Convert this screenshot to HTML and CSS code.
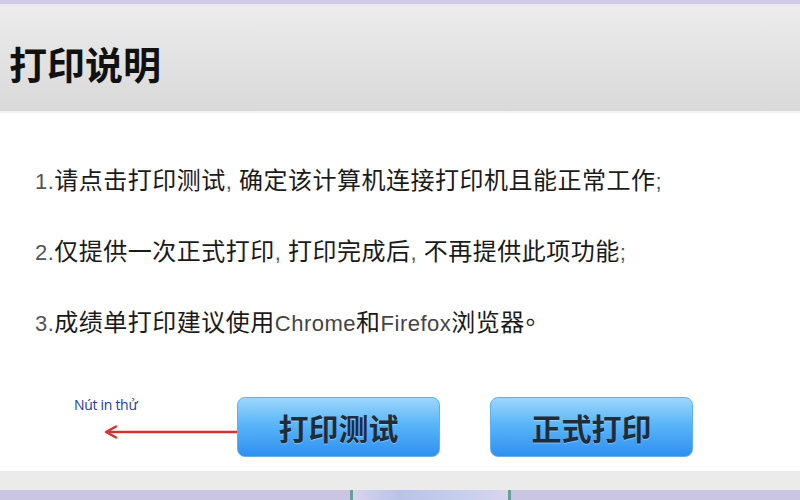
FILE: index.html
```html
<!DOCTYPE html>
<html lang="zh-CN">
<head>
    <meta charset="UTF-8">
    <meta name="viewport" content="width=device-width, initial-scale=1.0">
    <title>打印说明</title>
    <link rel="stylesheet" href="styles.css">
</head>
<body>
    <div class="top-strip"></div>
    <div class="header">
        <h1>打印说明</h1>
    </div>

    <div class="content">
        <p class="line"><span class="num">1.</span>请点击打印测试<span class="num">, </span>确定该计算机连接打印机且能正常工作<span class="num">;</span></p>
        <p class="line"><span class="num">2.</span>仅提供一次正式打印<span class="num">, </span>打印完成后<span class="num">, </span>不再提供此项功能<span class="num">;</span></p>
        <p class="line"><span class="num">3.</span>成绩单打印建议使用<span class="latin">Chrome</span>和<span class="latin">Firefox</span>浏览器<span class="dot">。</span></p>

        <div class="actions">
            <div class="note">
                <span class="note-text">Nút in thử</span>
                <svg class="arrow" width="134" height="14" viewBox="0 0 134 14">
                    <line x1="6" y1="7" x2="134" y2="7" stroke="#d2332f" stroke-width="2.5"/>
                    <polyline points="13,1.5 3,7 13,12.5" fill="none" stroke="#d2332f" stroke-width="2.5" stroke-linecap="round" stroke-linejoin="round"/>
                </svg>
            </div>
            <button class="btn">打印测试</button>
            <button class="btn">正式打印</button>
        </div>
    </div>

    <div class="footer"></div>
    <div class="bottom-strip">
        <div class="bottom-deco"></div>
    </div>
</body>
</html>
```

FILE: styles.css
```css
body { margin: 0; background: #fff; font-family: "Liberation Sans", "Noto Sans CJK SC", sans-serif; color: #1c1c1c; overflow: hidden; }
.top-strip { height: 4px; background: #cfcae6; border-bottom: 3px solid #ebe8f4; }
.header { height: 106px; display: flex; align-items: center; padding: 6px 0 0 9px; box-sizing: border-box; background: linear-gradient(#ececec, #d9d9d9); border-bottom: 2px solid #f2f2f2; }
.header h1 { margin: 0; font-family: "Noto Sans CJK SC", sans-serif; font-size: 38px; font-weight: 700; color: #111; }
.content { height: 358px; padding: 30px 0 0 35px; box-sizing: border-box; }
.line { margin: 0; height: 71px; line-height: 71px; font-family: "Noto Sans CJK SC", sans-serif; font-size: 24px; letter-spacing: 0.5px; color: #1a1a1a; }
.num { font-family: "Liberation Sans", sans-serif; color: #555; font-size: 22px; }
.latin { font-family: "Liberation Sans", sans-serif; color: #444; font-size: 22px; }
.dot { position: relative; top: -7px; margin-left: 1px; color: #222; }
.actions { display: flex; align-items: flex-start; margin-top: 41px; }
.note { width: 202px; display: flex; flex-direction: column; align-items: flex-start; }
.note-text { margin: 0 0 12px 39px; font-family: "Open Sans", sans-serif; font-size: 14px; letter-spacing: -0.3px; color: #1d3c99; line-height: 16px; }
.arrow { margin-left: 68px; display: block; }
.btn { width: 203px; height: 60px; margin-right: 50px; border: 1px solid #5fb0f0; border-radius: 8px; background: linear-gradient(#9dd6fb, #5ab6f8 45%, #2f8ff0); font-family: "Noto Sans CJK SC", sans-serif; font-size: 30px; font-weight: 700; color: #1f2d3b; text-shadow: 0 1px 1px rgba(255,255,255,0.35); padding: 0; }
.footer { height: 19px; background: #ebebeb; }
.bottom-strip { height: 12px; background: #cbc5e4; position: relative; }
.bottom-deco { position: absolute; left: 350px; top: 0; width: 155px; height: 12px; background: linear-gradient(90deg, #d9d4ee, #b9c3e8 30%, #c7cfee 70%, #d9d4ee); border-left: 3px solid #6a9f98; border-right: 3px solid #6a9f98; }
```
